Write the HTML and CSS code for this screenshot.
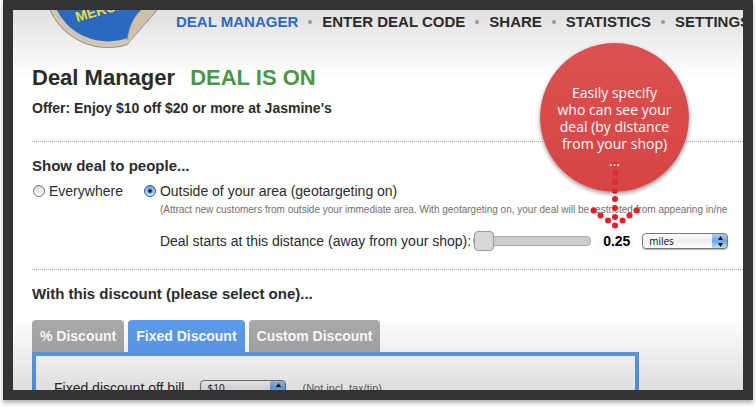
FILE: index.html
```html
<!DOCTYPE html>
<html lang="en">
<head>
<meta charset="utf-8">
<title>Deal Manager</title>
<link rel="stylesheet" href="styles.css">
</head>
<body>
<div class="frame">
  <header class="top">
    <svg class="badge" width="108" height="40" viewBox="50 10 108 40" role="img" aria-label="Merchant badge">
      <clipPath id="cut"><path d="M40 0 H166 L126 46 V50 H40Z"/></clipPath>
      <g clip-path="url(#cut)">
        <circle cx="108" cy="-16" r="64" fill="#9c9484"/>
        <circle cx="108" cy="-16" r="63" fill="#d3c8b4"/>
        <circle cx="108" cy="-16" r="60" fill="none" stroke="#b8ad98" stroke-width="1" stroke-dasharray="1 2"/>
        <circle cx="108" cy="-16" r="57.500" fill="#2a69bd"/>
      </g>
      <path d="M141 10 C133 17 129 27 127 40 L126 46 L157 10Z" fill="#cdc1ab"/>
      <path d="M157 10 L126 46" stroke="#a69c8a" stroke-width=".8"/>
      <path d="M141 10 C133 17 129 27 127 40" fill="none" stroke="#6c7f98" stroke-width=".8"/>
      <text class="badge-text" transform="translate(77 22) rotate(-16)">MERCHANT</text>
    </svg>
    <nav class="nav">
      <a class="current" href="#">DEAL MANAGER</a><i></i>
      <a href="#">ENTER DEAL CODE</a><i></i>
      <a href="#">SHARE</a><i></i>
      <a href="#">STATISTICS</a><i></i>
      <a href="#">SETTINGS</a>
    </nav>
  </header>
  <main class="main">
    <section class="intro">
      <h1>Deal Manager <span class="on">DEAL IS ON</span></h1>
      <p class="offer">Offer: Enjoy $10 off $20 or more at Jasmine's</p>
    </section>
    <section class="people">
      <h2>Show deal to people...</h2>
      <div class="choices">
        <label class="choice"><input type="radio" name="people">Everywhere</label>
        <div>
          <label class="choice"><input type="radio" name="people" checked>Outside of your area (geotargeting on)</label>
          <p class="note">(Attract new customers from outside your immediate area. With geotargeting on, your deal will be restricted from appearing in/ne</p>
          <div class="distance">
            <label for="dist">Deal starts at this distance (away from your shop):</label>
            <input id="dist" class="slider" type="range" min="0" max="10" value="0" step="0.25">
            <output class="value" for="dist">0.25</output>
            <span class="pick">
              <select aria-label="Distance unit"><option>miles</option><option>km</option></select>
              <svg width="7" height="11" viewBox="0 0 7 11"><path d="M3.500 0 L6 4 H1Z M3.500 11 L6 7 H1Z" fill="#111"/></svg>
            </span>
          </div>
        </div>
      </div>
    </section>
    <section class="discount">
      <h2>With this discount (please select one)...</h2>
      <div class="tabs">
        <button type="button">% Discount</button>
        <button type="button" class="active">Fixed Discount</button>
        <button type="button">Custom Discount</button>
      </div>
      <div class="panel">
        <label for="off">Fixed discount off bill</label>
        <span class="pick">
          <select id="off"><option>$10</option><option>$20</option></select>
          <svg width="7" height="11" viewBox="0 0 7 11"><path d="M3.500 0 L6 4 H1Z M3.500 11 L6 7 H1Z" fill="#111"/></svg>
        </span>
        <span class="hint">(Not incl. tax/tip)</span>
      </div>
    </section>
  </main>
  <aside class="callout">
    <svg class="arrow" width="52" height="72" viewBox="589 158 52 72" fill="#ed1c24">
      <circle cx="615" cy="164" r="3"/><circle cx="615" cy="173" r="3"/><circle cx="615" cy="182" r="3"/><circle cx="615" cy="190.500" r="3"/>
      <circle cx="615" cy="199" r="3"/><circle cx="615" cy="208" r="3"/><circle cx="615" cy="217" r="3"/><circle cx="615" cy="225.500" r="3"/>
      <circle cx="593.500" cy="210.500" r="3"/><circle cx="600.500" cy="215.500" r="3"/><circle cx="608" cy="220.500" r="3"/>
      <circle cx="622.500" cy="220.500" r="3"/><circle cx="629.500" cy="215.500" r="3"/><circle cx="636.500" cy="210.500" r="3"/>
    </svg>
    <p class="bubble">Easily specify<br>who can see your<br>deal (by distance<br>from your shop)<br>...</p>
  </aside>
</div>
</body>
</html>
```
FILE: styles.css
```css
* { box-sizing: border-box; }
body {
  margin: 0;
  padding: 0 3px;
  min-height: 100vh;
  background: #fff;
  color: #2b2b2b;
  font: 14px/20px "Liberation Sans", Arial, sans-serif;
  overflow: hidden;
}
h1, h2, p { margin: 0; }
.frame {
  position: relative;
  height: calc(100vh - 7px);
  border: 10px solid #333;
  overflow: hidden;
  background: linear-gradient(#e0e0e0, #fff 68px);
  box-shadow: 0 3px 4px rgba(0, 0, 0, .3);
}
.frame::after {
  content: "";
  position: absolute;
  inset: auto 0 0;
  height: 74px;
  background: linear-gradient(rgba(0, 0, 0, 0), rgba(0, 0, 0, .13));
  pointer-events: none;
}
.top {
  display: flex;
  gap: 18px;
  padding-left: 37px;
  height: 54px;
}
.badge { flex: none; }
.badge-text {
  font: bold 14px "Liberation Sans Narrow", "Liberation Sans", Arial, sans-serif;
  fill: #f0d93c;
}
.nav {
  display: flex;
  align-items: center;
  gap: 10px;
  height: 24px;
  font-size: 15px;
  font-weight: bold;
  white-space: nowrap;
}
.nav a { color: inherit; text-decoration: none; }
.nav .current { color: #2f6abb; }
.nav i {
  width: 4px;
  height: 4px;
  border-radius: 50%;
  background: #999;
}
.main { padding-left: 19px; }
.intro {
  padding-bottom: 23px;
  border-bottom: 1px dotted #aaa;
}
h1 { font-size: 22px; line-height: 28px; }
.on { margin-left: 9px; color: #499649; }
.offer {
  padding-top: 6px;
  font-weight: bold;
}
h2 { font-size: 15px; line-height: 20px; }
.people {
  padding: 14px 0 17px;
  border-bottom: 1px dotted #aaa;
}
.choices {
  display: flex;
  gap: 20px;
  padding-top: 5px;
  white-space: nowrap;
}
.choice {
  display: flex;
  align-items: center;
  gap: 4px;
  height: 20px;
}
input[type="radio"] {
  appearance: none;
  width: 12px;
  height: 12px;
  margin: 0 0 0 1px;
  border: 1px solid #777;
  border-radius: 50%;
  background: linear-gradient(#d8d8d8, #fff);
}
input[type="radio"]:checked {
  border-color: #37598c;
  background: radial-gradient(circle, #102040 1px, transparent 3px), linear-gradient(#6fa5e6, #c5ecff);
}
.note {
  padding-left: 17px;
  font-size: 10px;
  line-height: 18px;
  color: #707070;
}
.distance {
  display: flex;
  align-items: center;
  padding: 11px 0 0 17px;
  height: 33px;
}
.slider {
  appearance: none;
  width: 118px;
  height: 20px;
  margin: 0 12px 0 2px;
  background: none;
}
.slider::-webkit-slider-runnable-track {
  height: 10px;
  border: 1px solid #aaa;
  border-radius: 4px;
  background: #ccc;
}
.slider::-webkit-slider-thumb {
  appearance: none;
  width: 20px;
  height: 20px;
  margin-top: -6px;
  border: 1px solid #999;
  border-radius: 4px;
  background: #d8d8d8;
}
.value {
  width: 39px;
  font-weight: bold;
  color: #000;
}
.pick { position: relative; display: flex; }
.pick select {
  appearance: none;
  width: 86px;
  height: 16px;
  padding: 0 6px;
  border: 1px solid #777;
  border-radius: 4px;
  background: linear-gradient(#a9cbf3, #6ba6e8 50%, #b5e4ff) right / 15px 100% no-repeat, linear-gradient(#fff, #eee 50%, #fff);
  box-shadow: 0 1px 1px rgba(0, 0, 0, .3);
  color: #111;
  font: 500 10px/14px "Open Sans", sans-serif;
}
.pick svg {
  position: absolute;
  right: 4px;
  top: 3px;
  pointer-events: none;
}
.discount { padding-top: 14px; }
.tabs {
  display: flex;
  gap: 4px;
  padding-top: 16px;
}
.tabs button {
  height: 32px;
  padding: 0 8px;
  border: 0;
  border-radius: 4px 4px 0 0;
  background: #aaa;
  color: #fff;
  font: bold 14px/20px "Liberation Sans", Arial, sans-serif;
}
.tabs .active { background: #5c9ced; }
.panel {
  display: flex;
  align-items: center;
  max-width: 607px;
  height: 72px;
  padding-left: 18px;
  border: 4px solid #5c9ced;
  background: #fff;
}
.panel .pick { margin: 0 16px; }
.hint { font-size: 11px; color: #666; }
.callout {
  position: absolute;
  top: 33px;
  right: 54px;
  width: 149px;
}
.bubble {
  position: relative;
  height: 149px;
  padding-top: 41px;
  border-radius: 50%;
  background: linear-gradient(rgba(218, 74, 74, .96), rgba(211, 48, 48, .9));
  box-shadow: 0 2px 4px rgba(0, 0, 0, .4);
  color: #fff;
  font: 14px/17px "Open Sans", sans-serif;
  text-align: center;
}
.arrow {
  position: absolute;
  left: 49px;
  top: 115px;
}
```
